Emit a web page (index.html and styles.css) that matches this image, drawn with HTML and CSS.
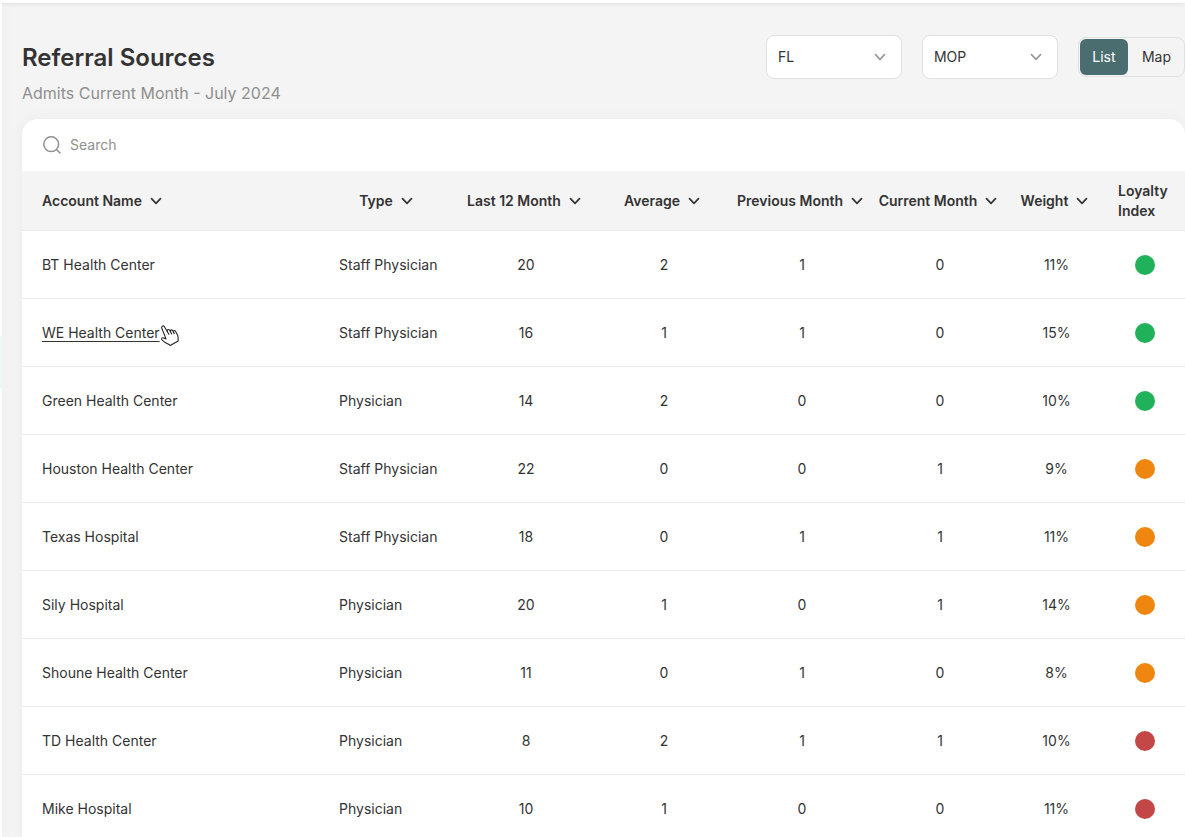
FILE: index.html
```html
<!DOCTYPE html>
<html lang="en">
<head>
<meta charset="utf-8">
<meta name="viewport" content="width=device-width, initial-scale=1">
<title>Referral Sources</title>
<link rel="stylesheet" href="styles.css">
</head>
<body>
<svg class="defs" aria-hidden="true">
  <symbol id="chevron" viewBox="0 0 16 16"><path d="M3.500 5.700 8 10.300l4.500-4.600" fill="none" stroke="currentColor" stroke-width="1.700" stroke-linecap="round" stroke-linejoin="round"/></symbol>
</svg>
<div class="topbar"></div>
<div class="shell">
  <nav class="rail" aria-label="Main"><div class="rail-active"></div></nav>
  <main class="content">
    <header class="page-header">
      <div class="heading">
        <h1 class="title">Referral Sources</h1>
        <p class="subtitle">Admits Current Month - July 2024</p>
      </div>
      <div class="controls">
        <div class="select-wrap">
          <select class="select" aria-label="State"><option>FL</option></select>
          <svg class="icon select-icon" aria-hidden="true"><use href="#chevron"/></svg>
        </div>
        <div class="select-wrap">
          <select class="select" aria-label="Program"><option>MOP</option></select>
          <svg class="icon select-icon" aria-hidden="true"><use href="#chevron"/></svg>
        </div>
        <div class="toggle" role="group" aria-label="View">
          <button class="toggle-btn toggle-on" type="button" aria-pressed="true">List</button>
          <button class="toggle-btn" type="button" aria-pressed="false">Map</button>
        </div>
      </div>
    </header>
    <section class="panel">
      <label class="search">
        <svg class="search-icon" viewBox="0 0 20 20" aria-hidden="true"><circle cx="9.200" cy="9.200" r="7.400"/><path d="m14.500 14.500 3.500 3.500"/></svg>
        <input class="search-input" type="search" placeholder="Search" aria-label="Search">
      </label>
      <table class="table">
        <colgroup>
          <col><col class="col-std"><col class="col-std"><col class="col-std"><col class="col-std"><col class="col-std"><col class="col-weight"><col class="col-index">
        </colgroup>
        <thead>
          <tr>
            <th class="left"><button class="sort" type="button">Account Name<svg class="icon" aria-hidden="true"><use href="#chevron"/></svg></button></th>
            <th><button class="sort" type="button">Type<svg class="icon" aria-hidden="true"><use href="#chevron"/></svg></button></th>
            <th><button class="sort" type="button">Last 12 Month<svg class="icon" aria-hidden="true"><use href="#chevron"/></svg></button></th>
            <th><button class="sort" type="button">Average<svg class="icon" aria-hidden="true"><use href="#chevron"/></svg></button></th>
            <th><button class="sort" type="button">Previous Month<svg class="icon" aria-hidden="true"><use href="#chevron"/></svg></button></th>
            <th><button class="sort" type="button">Current Month<svg class="icon" aria-hidden="true"><use href="#chevron"/></svg></button></th>
            <th><button class="sort" type="button">Weight<svg class="icon" aria-hidden="true"><use href="#chevron"/></svg></button></th>
            <th class="index-head">Loyalty Index</th>
          </tr>
        </thead>
        <tbody>
          <tr><td class="left"><a class="account" href="#">BT Health Center</a></td><td class="left">Staff Physician</td><td>20</td><td>2</td><td>1</td><td>0</td><td>11%</td><td><span class="dot green" role="img" aria-label="High"></span></td></tr>
          <tr><td class="left"><a class="account hovered" href="#">WE Health Center<svg class="pointer" viewBox="0 0 20 23" aria-hidden="true"><path d="M1.800 4.300C.9 2.400 3.300 1 4.400 2.700l3 5C6.500 5.900 8.600 4.700 9.600 6.300l.9 1.500c-.8-1.600 1.200-2.600 2.100-1.200l.8 1.500c-.6-1.400 1.300-2.200 2.100-.8l2.100 3.900c.9 1.800.3 3.800.6 5.700l-8 4.600c-1.400-1.700-3.700-2-5.500-3.300l-2.500-2.100c-1.400-1.300-.1-2.900 1.500-2.200l2.300 1z"/><path d="m7.400 7.700 1.500 2.600M10.500 7.800l1.200 2.100M13.400 8.100l.9 1.500"/></svg></a></td><td class="left">Staff Physician</td><td>16</td><td>1</td><td>1</td><td>0</td><td>15%</td><td><span class="dot green" role="img" aria-label="High"></span></td></tr>
          <tr><td class="left"><a class="account" href="#">Green Health Center</a></td><td class="left">Physician</td><td>14</td><td>2</td><td>0</td><td>0</td><td>10%</td><td><span class="dot green" role="img" aria-label="High"></span></td></tr>
          <tr><td class="left"><a class="account" href="#">Houston Health Center</a></td><td class="left">Staff Physician</td><td>22</td><td>0</td><td>0</td><td>1</td><td>9%</td><td><span class="dot orange" role="img" aria-label="Medium"></span></td></tr>
          <tr><td class="left"><a class="account" href="#">Texas Hospital</a></td><td class="left">Staff Physician</td><td>18</td><td>0</td><td>1</td><td>1</td><td>11%</td><td><span class="dot orange" role="img" aria-label="Medium"></span></td></tr>
          <tr><td class="left"><a class="account" href="#">Sily Hospital</a></td><td class="left">Physician</td><td>20</td><td>1</td><td>0</td><td>1</td><td>14%</td><td><span class="dot orange" role="img" aria-label="Medium"></span></td></tr>
          <tr><td class="left"><a class="account" href="#">Shoune Health Center</a></td><td class="left">Physician</td><td>11</td><td>0</td><td>1</td><td>0</td><td>8%</td><td><span class="dot orange" role="img" aria-label="Medium"></span></td></tr>
          <tr><td class="left"><a class="account" href="#">TD Health Center</a></td><td class="left">Physician</td><td>8</td><td>2</td><td>1</td><td>1</td><td>10%</td><td><span class="dot red" role="img" aria-label="Low"></span></td></tr>
          <tr><td class="left"><a class="account" href="#">Mike Hospital</a></td><td class="left">Physician</td><td>10</td><td>1</td><td>0</td><td>0</td><td>11%</td><td><span class="dot red" role="img" aria-label="Low"></span></td></tr>
        </tbody>
      </table>
    </section>
  </main>
</div>
</body>
</html>
```

FILE: styles.css
```css
* { box-sizing: border-box; }

body {
  margin: 0;
  height: 100vh;
  overflow: hidden;
  display: flex;
  flex-direction: column;
  background: #f4f4f4;
  color: #333;
  font: 14px/20px Inter, sans-serif;
}

button, select, input { font: inherit; color: inherit; }

.defs { display: none; }
.icon { width: 16px; height: 16px; flex: none; }

.topbar {
  flex: none;
  height: 3px;
  background: #fff;
  box-shadow: 0 1px 4px rgba(0, 0, 0, 0.1);
}

.shell {
  flex: 1;
  min-height: 0;
  display: flex;
}

.rail {
  flex: none;
  width: 2px;
  padding-top: 333px;
  background: #fff;
  box-shadow: 0 0 16px rgba(0, 0, 0, 0.1);
}
.rail-active { height: 52px; background: #e8f8f8; }

.content {
  flex: 1;
  min-width: 0;
  padding: 32px 0 0 20px;
}

.page-header {
  display: flex;
  justify-content: space-between;
  align-items: flex-start;
  height: 84px;
}
.heading { padding-top: 7px; }
.title { margin: 0; font-size: 24px; line-height: 32px; font-weight: 600; }
.subtitle { margin: 9px 0 0; font-size: 16px; line-height: 20px; color: #8f8f8f; }

.controls { display: flex; align-items: center; gap: 20px; }

.select-wrap { display: grid; align-items: center; width: 136px; }
.select-wrap > * { grid-area: 1 / 1; }
.select {
  appearance: none;
  width: 100%;
  height: 44px;
  padding: 0 36px 0 11px;
  border: 1px solid #e0e0e0;
  border-radius: 8px;
  background: #fff;
}
.select-icon {
  justify-self: end;
  margin-right: 14px;
  color: #999;
  pointer-events: none;
}

.toggle {
  display: flex;
  height: 40px;
  padding: 1px;
  border: 1px solid #e0e0e0;
  border-radius: 8px;
}
.toggle-btn {
  padding: 0 12px 0 14px;
  border: 0;
  border-radius: 6px;
  background: transparent;
}
.toggle-on { padding: 0 12px; min-width: 48px; background: #4a6e6f; color: #fff; }

.panel {
  border-radius: 16px 16px 0 0;
  background: #fff;
  box-shadow: 0 0 16px rgba(0, 0, 0, 0.04);
}

.search {
  display: flex;
  align-items: center;
  gap: 8px;
  height: 52px;
  padding: 0 20px;
}
.search-icon {
  width: 20px;
  height: 20px;
  flex: none;
  fill: none;
  stroke: #8f8f8f;
  stroke-width: 1.5;
  stroke-linecap: round;
}
.search-input {
  flex: 1;
  min-width: 0;
  padding: 0;
  border: 0;
  outline: 0;
  background: transparent;
}
.search-input::placeholder { color: #8f8f8f; opacity: 1; }

.table {
  width: 100%;
  table-layout: fixed;
  border-collapse: separate;
  border-spacing: 0;
}
.col-std { width: 138px; }
.col-weight { width: 95px; }
.col-index { width: 81px; }

th, td { padding: 0; border-bottom: 1px solid #ebebeb; text-align: center; }
th { height: 60px; padding-right: 2px; background: #f4f4f4; font-weight: 600; }
td { height: 68px; }
.left { padding-left: 20px; text-align: left; }
.index-head { padding-left: 14px; text-align: left; }

.sort {
  display: inline-flex;
  align-items: center;
  gap: 6px;
  padding: 0;
  border: 0;
  background: none;
  font-weight: 600;
  white-space: nowrap;
}

.account { position: relative; color: inherit; text-decoration: none; }
.hovered {
  text-decoration: underline;
  text-underline-offset: 3px;
}
.pointer {
  position: absolute;
  top: 0;
  left: 100%;
  width: 20px;
  height: 23px;
  fill: #fff;
  stroke: #222;
  stroke-width: 1.1;
  stroke-linecap: round;
  stroke-linejoin: round;
}

.dot {
  display: inline-block;
  width: 20px;
  height: 20px;
  border-radius: 50%;
  vertical-align: middle;
}
.green { background: #20b15a; }
.orange { background: #ef860f; }
.red { background: #c34747; }
```
